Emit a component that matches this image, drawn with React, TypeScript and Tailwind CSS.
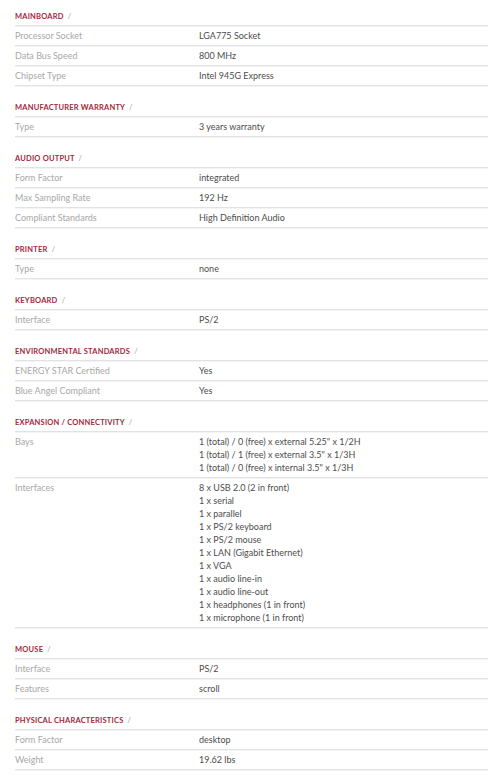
type Row = { label: string; values: string[] };
type Section = { title: string; rows: Row[] };

const SECTIONS: Section[] = [
  {
    title: 'Mainboard',
    rows: [
      { label: 'Processor Socket', values: ['LGA775 Socket'] },
      { label: 'Data Bus Speed', values: ['800 MHz'] },
      { label: 'Chipset Type', values: ['Intel 945G Express'] },
    ],
  },
  { title: 'Manufacturer Warranty', rows: [{ label: 'Type', values: ['3 years warranty'] }] },
  {
    title: 'Audio Output',
    rows: [
      { label: 'Form Factor', values: ['integrated'] },
      { label: 'Max Sampling Rate', values: ['192 Hz'] },
      { label: 'Compliant Standards', values: ['High Definition Audio'] },
    ],
  },
  { title: 'Printer', rows: [{ label: 'Type', values: ['none'] }] },
  { title: 'Keyboard', rows: [{ label: 'Interface', values: ['PS/2'] }] },
  {
    title: 'Environmental Standards',
    rows: [
      { label: 'ENERGY STAR Certified', values: ['Yes'] },
      { label: 'Blue Angel Compliant', values: ['Yes'] },
    ],
  },
  {
    title: 'Expansion / Connectivity',
    rows: [
      {
        label: 'Bays',
        values: [
          '1 (total) / 0 (free) x external 5.25" x 1/2H',
          '1 (total) / 1 (free) x external 3.5" x 1/3H',
          '1 (total) / 0 (free) x internal 3.5" x 1/3H',
        ],
      },
      {
        label: 'Interfaces',
        values: [
          '8 x USB 2.0 (2 in front)',
          '1 x serial',
          '1 x parallel',
          '1 x PS/2 keyboard',
          '1 x PS/2 mouse',
          '1 x LAN (Gigabit Ethernet)',
          '1 x VGA',
          '1 x audio line-in',
          '1 x audio line-out',
          '1 x headphones (1 in front)',
          '1 x microphone (1 in front)',
        ],
      },
    ],
  },
  {
    title: 'Mouse',
    rows: [
      { label: 'Interface', values: ['PS/2'] },
      { label: 'Features', values: ['scroll'] },
    ],
  },
  {
    title: 'Physical Characteristics',
    rows: [
      { label: 'Form Factor', values: ['desktop'] },
      { label: 'Weight', values: ['19.62 lbs'] },
    ],
  },
];

function SpecRow({ row }: { row: Row }) {
  return (
    <div className="flex border-b border-[#e2e2e2] py-[3px] leading-[13px] shadow-[0_1px_0_#f4f4f4]">
      <div className="w-[184px] shrink-0 text-[#a8a8a8]">{row.label}</div>
      <div className="text-[#4d4d4d]">
        {row.values.map((v) => (
          <div key={v}>{v}</div>
        ))}
      </div>
    </div>
  );
}

export default function App() {
  return (
    <div className="min-h-[779px] w-[500px] bg-white pl-[15px] pr-[12px] text-[9px] font-['Lato','Liberation_Sans',sans-serif]">
      {SECTIONS.map((section, i) => (
        <section key={section.title}>
          <h3
            className={`${i === 0 ? 'pt-[10px]' : 'pt-[15px]'} border-b border-[#e2e2e2] pb-[2px] text-[7.5px] leading-[13px] font-bold tracking-[0.2px] uppercase text-[#a3283c] shadow-[0_1px_0_#f4f4f4]`}
          >
            {section.title} <span className="font-normal text-[#999]">&nbsp;/</span>
          </h3>
          {section.rows.map((row) => (
            <SpecRow key={row.label} row={row} />
          ))}
        </section>
      ))}
    </div>
  );
}
